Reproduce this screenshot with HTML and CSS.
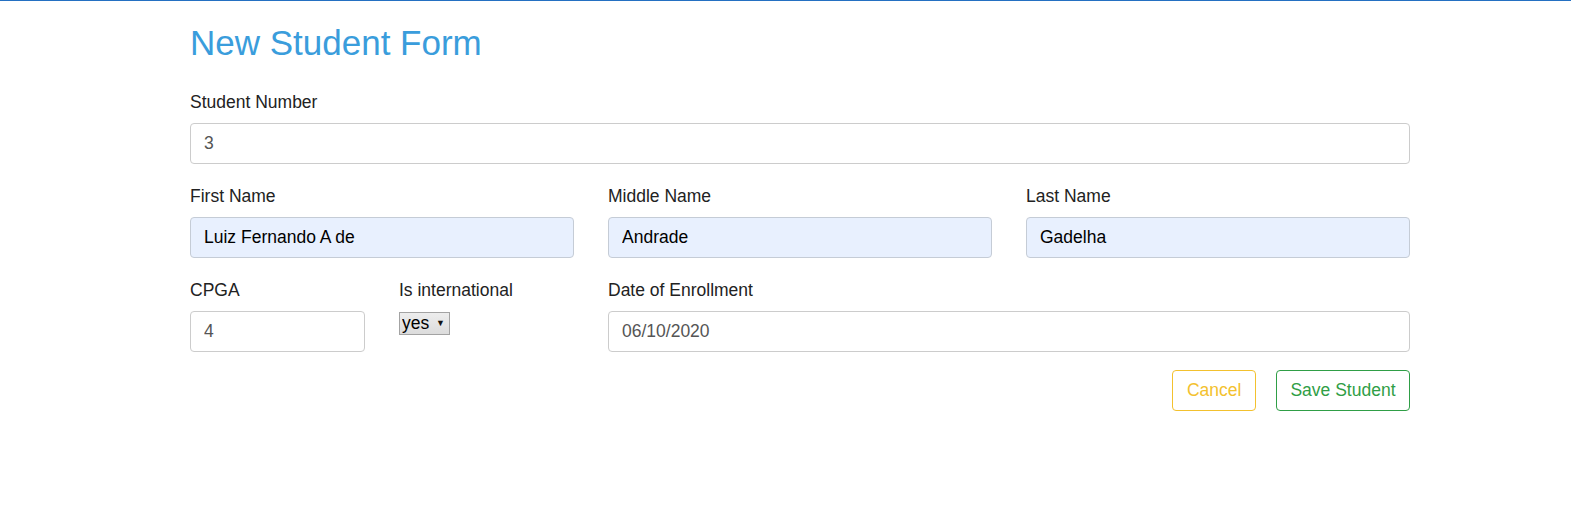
FILE: index.html
```html
<!DOCTYPE html>
<html lang="en">
<head>
<meta charset="utf-8">
<title>New Student Form</title>
<link rel="stylesheet" href="styles.css">
</head>
<body>
<div class="page">
  <div class="container">
    <h1 class="title">New Student Form</h1>
    <form class="form">
      <div class="row">
        <div class="group col-12">
          <label class="label" for="num">Student Number</label>
          <input class="control" id="num" type="text" value="3">
        </div>
      </div>
      <div class="row">
        <div class="group col-4">
          <label class="label" for="first">First Name</label>
          <input class="control autofill" id="first" type="text" value="Luiz Fernando A de">
        </div>
        <div class="group col-4">
          <label class="label" for="middle">Middle Name</label>
          <input class="control autofill" id="middle" type="text" value="Andrade">
        </div>
        <div class="group col-4">
          <label class="label" for="last">Last Name</label>
          <input class="control autofill" id="last" type="text" value="Gadelha">
        </div>
      </div>
      <div class="row">
        <div class="group col-2">
          <label class="label" for="cpga">CPGA</label>
          <input class="control" id="cpga" type="text" value="4">
        </div>
        <div class="group col-2">
          <label class="label" for="intl">Is international</label>
          <span class="select-wrap">
            <select class="select" id="intl">
              <option>yes</option>
              <option>no</option>
            </select>
          </span>
        </div>
        <div class="group col-8">
          <label class="label" for="date">Date of Enrollment</label>
          <input class="control" id="date" type="text" value="06/10/2020">
        </div>
      </div>
      <div class="actions">
        <button type="button" class="btn btn-warning">Cancel</button>
        <button type="button" class="btn btn-success">Save Student</button>
      </div>
    </form>
  </div>
</div>
</body>
</html>
```

FILE: styles.css
```css
* { box-sizing: border-box; }

html, body {
  margin: 0;
  padding: 0;
  background: #fff;
}

body {
  font-family: "Liberation Sans", Arial, sans-serif;
  font-size: 17.5px;
  color: #333;
}

.page {
  border-top: 1px solid #2470c2;
  min-height: 530px;
}

.container {
  margin-left: 190px;
  width: 1220px;
}

.title {
  margin: 23px 0 0;
  font-size: 35px;
  font-weight: 400;
  line-height: 38.5px;
  color: #3a9ddc;
}

.form {
  margin-top: 26px;
}

.row {
  display: grid;
  grid-template-columns: repeat(12, 1fr);
  column-gap: 34px;
}

.col-12 { grid-column: span 12; }
.col-8 { grid-column: span 8; }
.col-4 { grid-column: span 4; }
.col-2 { grid-column: span 2; }

.group {
  margin-bottom: 19px;
  display: flex;
  flex-direction: column;
  align-items: flex-start;
}

.label {
  display: block;
  height: 25px;
  line-height: 25px;
  margin-top: 1px;
  margin-bottom: 8px;
  color: #222;
}

.control {
  display: block;
  width: 100%;
  height: 41px;
  padding: 0 13px;
  font-family: inherit;
  font-size: 17.5px;
  color: #555;
  background: #fff;
  border: 1px solid #ccc;
  border-radius: 4px;
  outline: none;
}

.control.autofill {
  background: #e8f0fe;
  border-color: #c5ccd6;
  color: #000;
}

.select-wrap {
  position: relative;
  display: inline-block;
  margin-top: 1px;
}

.select {
  -webkit-appearance: none;
  appearance: none;
  display: block;
  width: 51px;
  height: 23px;
  padding: 0 0 0 2px;
  font-family: inherit;
  font-size: 17.5px;
  line-height: 21px;
  color: #000;
  background: linear-gradient(#ededed, #dcdcdc);
  border: 1px solid #a3a3a3;
  border-radius: 0;
  outline: none;
}

.select-wrap::after {
  content: "\25BC";
  position: absolute;
  right: 5px;
  top: 6px;
  font-size: 9px;
  line-height: 10px;
  color: #111;
  pointer-events: none;
}

.actions {
  display: flex;
  justify-content: flex-end;
  gap: 20px;
  margin-top: -1px;
}

.btn {
  height: 41px;
  padding: 0 13.5px;
  font-family: inherit;
  font-size: 17.5px;
  background: #fff;
  border: 1px solid;
  border-radius: 4px;
  cursor: pointer;
}

.btn-warning {
  color: #f3c12e;
  border-color: #f3c12e;
}

.btn-success {
  color: #2f9e46;
  border-color: #2f9e46;
}
```
